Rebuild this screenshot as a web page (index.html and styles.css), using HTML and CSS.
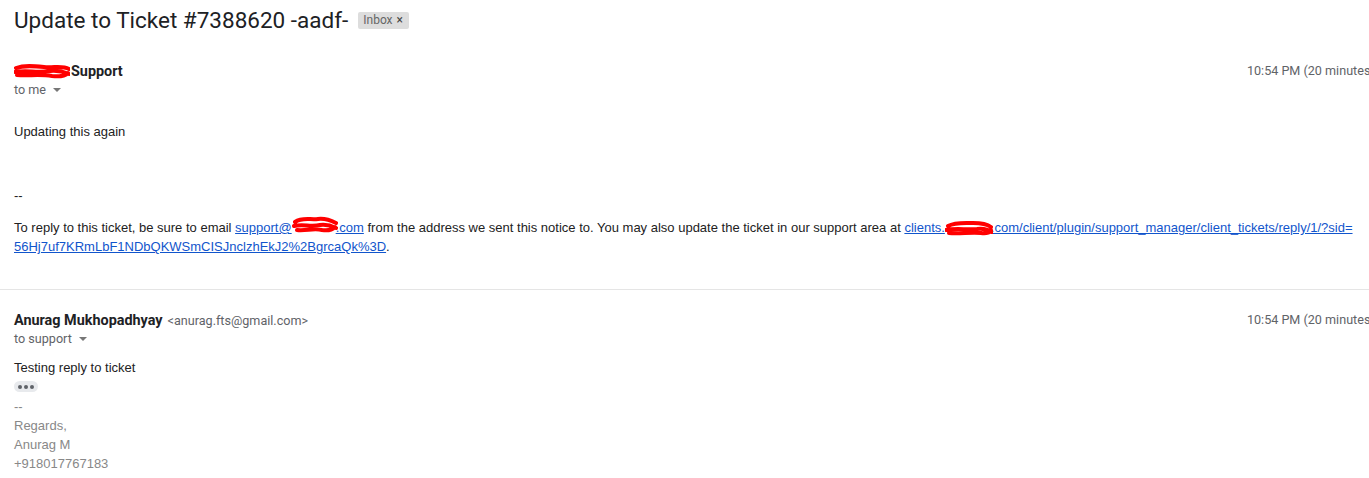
FILE: index.html
```html
<!DOCTYPE html>
<html lang="en">

<head>
    <meta charset="UTF-8">
    <meta name="viewport" content="width=device-width, initial-scale=1.0">
    <title>Update to Ticket #7388620 -aadf-</title>
    <link rel="stylesheet" href="styles.css">
</head>

<body>
    <div class="subject">
        <h2>Update to Ticket #7388620 -aadf-</h2>
        <span class="label">Inbox <b>×</b></span>
    </div>

    <!-- first message -->
    <div class="msg msg1">
        <div class="head">
            <div class="who">
                <span class="name"><span class="redact r-name"><svg viewBox="0 0 56 16" width="56" height="16"><path d="M2 5 C10 2 20 3 30 4 C40 5 48 2 55 6 M1 9 C12 7 24 10 36 8 C44 7 50 9 55 11 M3 12 C14 13 26 11 38 13 C46 14 52 12 54 10" /></svg></span>Support</span>
            </div>
            <span class="time">10:54 PM (20 minutes ago)</span>
        </div>
        <div class="to">to me <span class="arrow"></span></div>

        <div class="body">
            <p class="first">Updating this again</p>
            <p class="dash">--</p>
            <p>To reply to this ticket, be sure to email <a href="#">support@<span class="redact r-mail"><svg viewBox="0 0 46 18" width="46" height="18"><path d="M3 6 C10 1 18 4 26 3 C34 2 40 5 44 7 M2 10 C10 8 20 11 28 9 C36 8 40 10 44 12 M5 14 C14 15 22 12 30 14 C36 15 41 13 43 11" /></svg></span>.com</a> from the address we sent this notice to. You may also update the ticket in our support area at <a href="#">clients.<span class="redact r-url"><svg viewBox="0 0 48 16" width="48" height="16"><path d="M3 6 C10 2 20 3 28 3 C36 3 42 4 46 7 M1 10 C10 8 22 10 32 9 C40 8 44 10 47 12 M4 13 C14 14 26 12 36 13 C42 14 46 12 46 10" /></svg></span>.com/client/plugin/support_manager/client_tickets/reply/1/?sid=<br>56Hj7uf7KRmLbF1NDbQKWSmCISJnclzhEkJ2%2BgrcaQk%3D</a>.</p>
        </div>
    </div>

    <div class="divider"></div>

    <!-- second message -->
    <div class="msg msg2">
        <div class="head">
            <div class="who">
                <span class="name">Anurag Mukhopadhyay</span>
                <span class="addr">&lt;anurag.fts@gmail.com&gt;</span>
            </div>
            <span class="time">10:54 PM (20 minutes ago)</span>
        </div>
        <div class="to">to support <span class="arrow"></span></div>

        <div class="body reply">
            <p>Testing reply to ticket</p>
            <div class="more"><i></i><i></i><i></i></div>
            <div class="sig">
                --<br>
                Regards,<br>
                Anurag M<br>
                +918017767183
            </div>
        </div>
    </div>
</body>

</html>
```

FILE: styles.css
```css
* {
    margin: 0;
    padding: 0;
    box-sizing: border-box;
}

html,
body {
    overflow: hidden;
}

body {
    background: #fff;
    color: #222;
    font-family: Roboto, "Liberation Sans", Arial, sans-serif;
}

.subject {
    display: flex;
    align-items: center;
    padding: 5px 14px 0;
    height: 34px;
}

.subject h2 {
    font-size: 22.5px;
    font-weight: 400;
    line-height: 28px;
    color: #202124;
}

.label {
    margin-left: 10px;
    margin-top: 1px;
    background: #ddd;
    color: #666;
    font-size: 12px;
    line-height: 17px;
    height: 17px;
    padding: 0 6px 0 5px;
    border-radius: 2px;
}

.label b {
    font-weight: 400;
    font-size: 12px;
    color: #444;
    margin-left: 1px;
}

.msg {
    padding-left: 14px;
}

.msg1 {
    padding-top: 26px;
}

.msg2 {
    padding-top: 19px;
}

.head {
    display: flex;
    align-items: center;
    height: 20px;
    margin-right: -30px;
}

.who {
    flex: 1;
    white-space: nowrap;
}

.name {
    font-size: 14.4px;
    font-weight: 700;
    color: #202124;
}

.addr {
    font-size: 12.6px;
    color: #5f6368;
    margin-left: 1px;
}

.time {
    flex: none;
    font-size: 12.6px;
    color: #5f6368;
    white-space: nowrap;
}

.to {
    font-size: 12.6px;
    color: #5f6368;
    line-height: 20px;
    height: 20px;
}

.arrow {
    display: inline-block;
    margin-left: 4px;
    vertical-align: middle;
    border-left: 4px solid transparent;
    border-right: 4px solid transparent;
    border-top: 4px solid #777;
    position: relative;
    top: -1px;
}

.body {
    font-family: "Liberation Sans", Arial, sans-serif;
    font-size: 13px;
    line-height: 19px;
    color: #222;
    padding-right: 12px;
}

.body .first {
    margin-top: 22px;
}

.body .dash {
    margin-top: 45px;
}

.dash + p {
    margin-top: 13px;
}

.body a {
    color: #15c;
}

.redact {
    position: relative;
    display: inline-block;
    vertical-align: -3px;
}

.redact svg {
    position: absolute;
    left: 0;
    top: 0;
}

.redact path {
    fill: none;
    stroke: #f00;
    stroke-width: 4;
    stroke-linecap: round;
}

.r-name {
    width: 57px;
    height: 14px;
}

.r-name svg {
    top: -2px;
}

.r-mail {
    width: 44px;
    height: 14px;
}

.r-mail svg {
    top: -5px;
}

.r-url {
    width: 46px;
    height: 14px;
}

.r-url svg {
    top: -1px;
}

.divider {
    height: 1px;
    background: #e5e5e5;
    margin-top: 33px;
}

.reply {
    margin-top: 9px;
}

.more {
    display: flex;
    align-items: center;
    justify-content: center;
    gap: 2px;
    width: 24px;
    height: 11px;
    margin: 4px 0 5px;
    background: #e8eaed;
    border-radius: 6px;
}

.more i {
    width: 4px;
    height: 4px;
    border-radius: 50%;
    background: #5f6368;
}

.sig {
    color: #888;
}
```
